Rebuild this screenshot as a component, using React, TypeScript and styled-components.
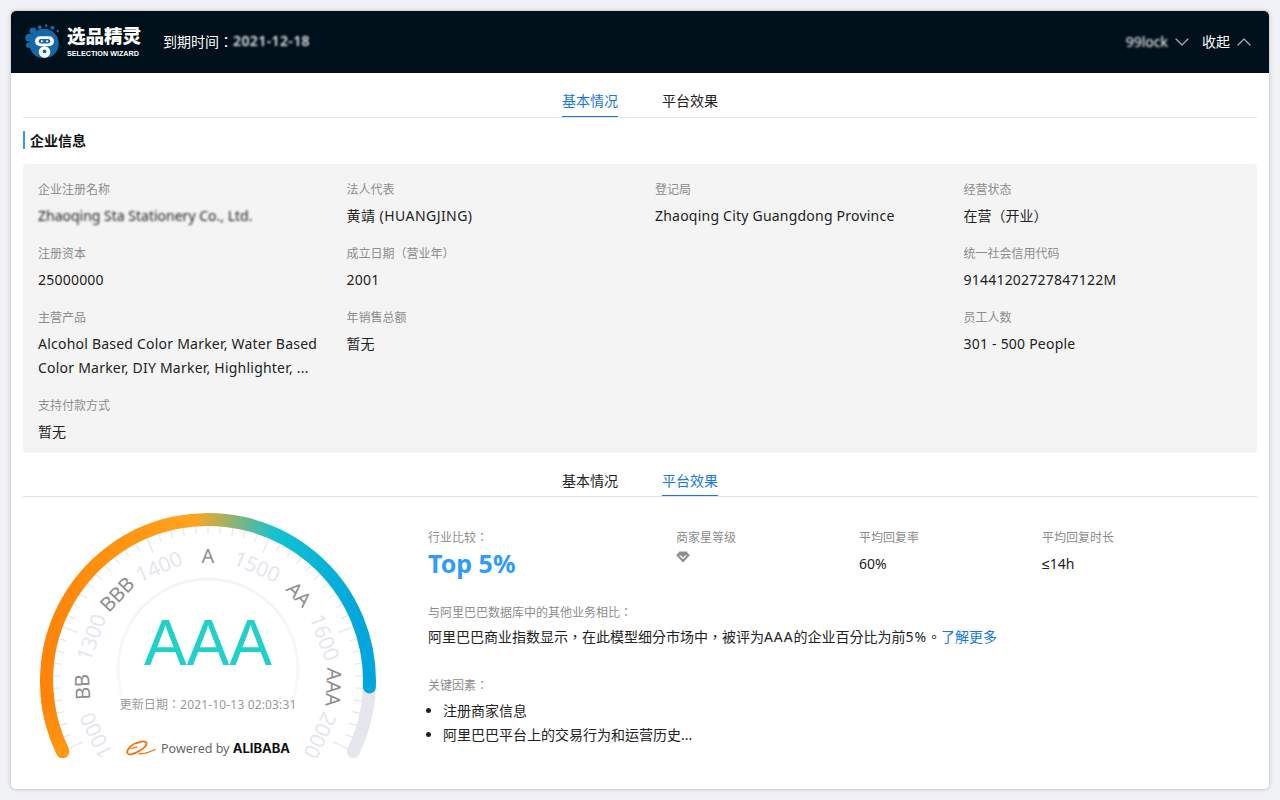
import React from 'react';
import styled, { createGlobalStyle } from 'styled-components';
import { ChevronDown, ChevronUp } from 'lucide-react';

const GlobalStyle = createGlobalStyle`
  html, body {
    margin: 0;
    background: #f0f2f5;
    font-family: "Noto Sans", "Noto Sans CJK TC", sans-serif;
    color: #222;
  }
  * { box-sizing: border-box; }
`;

const Page = styled.div`
  padding: 11px;
  height: 800px;
  overflow: hidden;
`;

const Card = styled.div`
  height: 778px;
  background: #fff;
  border-radius: 5px;
  box-shadow: 0 0 4px rgba(0, 0, 0, 0.25);
  overflow: hidden;
`;

const Header = styled.header`
  height: 62px;
  background: #00101a;
  display: flex;
  align-items: center;
  padding: 0 13px;
  color: #fff;
`;

const Brand = styled.div`
  display: flex;
  align-items: center;
  gap: 3px;
`;

const BrandText = styled.div`
  display: flex;
  flex-direction: column;
  width: 75px;
`;

const BrandName = styled.span`
  font-size: 18.5px;
  line-height: 22px;
  font-weight: 900;
  white-space: nowrap;
`;

const BrandSub = styled.span`
  margin-top: 2px;
  font-family: "Liberation Sans", sans-serif;
  font-size: 7.2px;
  line-height: 10px;
  font-weight: 700;
  white-space: nowrap;
`;

const Expire = styled.div`
  margin-left: 21px;
  padding-bottom: 3px;
  font-size: 14px;
  display: flex;
  align-items: center;
`;

const Blurred = styled.span`
  filter: blur(1.2px);
`;

const ExpireDate = styled(Blurred)`
  opacity: 0.9;
  font-weight: 600;
  letter-spacing: 0.4px;
`;

const HeaderRight = styled.div`
  margin-left: auto;
  display: flex;
  align-items: center;
  font-size: 14px;
`;

const HeaderAction = styled.div`
  display: flex;
  align-items: center;
  gap: 2px;
  & + & {
    margin-left: 8px;
  }
  svg {
    color: #a9aeb2;
  }
`;

const ActionLabel = styled.span`
  padding-bottom: 2px;
`;

const Tabs = styled.nav<{ $height: number }>`
  margin: 0 12px;
  height: ${p => p.$height}px;
  display: flex;
  justify-content: center;
  gap: 44px;
  border-bottom: 1px solid #e4e4e4;
`;

const Tab = styled.div<{ $active?: boolean }>`
  height: 100%;
  font-size: 14px;
  line-height: 24px;
  padding-top: 16px;
  color: ${p => (p.$active ? '#1677e8' : '#222')};
  border-bottom: 1px solid ${p => (p.$active ? '#1677e8' : 'transparent')};
`;

const Section = styled.section`
  padding: 0 12px;
`;

const SectionTitle = styled.h3`
  margin: 13px 0 15px;
  height: 18px;
  padding-left: 5px;
  border-left: 2px solid #2e9bff;
  font-size: 14px;
  line-height: 20px;
  font-weight: 700;
  color: #111;
`;

const InfoPanel = styled.div`
  display: grid;
  grid-template-columns: repeat(4, 1fr);
  row-gap: 18px;
  padding: 18px 0 9px;
  background: #f4f4f4;
  border-radius: 4px;
`;

const Field = styled.div`
  padding: 0 4px 0 15px;
`;

const FieldLabel = styled.div`
  font-size: 12px;
  line-height: 16px;
  color: #8c8c8c;
`;

const FieldValue = styled.div<{ $spacing?: number }>`
  margin-top: 6px;
  font-size: 14px;
  line-height: 24px;
  letter-spacing: ${p => p.$spacing ?? 0.22}px;
  color: #222;
`;

const Performance = styled.div`
  display: flex;
  padding: 0 12px;
`;

const Gauge = styled.svg`
  flex: none;
  width: 370px;
  height: 275px;
  margin-top: 8px;
`;

const RatingLabel = styled.text`
  font-size: 20px;
  fill: #8e8e8e;
  text-anchor: middle;
  dominant-baseline: central;
`;

const ScaleLabel = styled(RatingLabel)`
  font-size: 21px;
  fill: #e5e6ef;
`;

const GradeText = styled.text`
  font-family: "Liberation Sans", sans-serif;
  font-size: 64px;
  fill: #1fd1c8;
  text-anchor: middle;
`;

const UpdatedText = styled.text`
  font-size: 12px;
  letter-spacing: 0.15px;
  fill: #999;
  text-anchor: middle;
`;

const PoweredText = styled.text`
  font-size: 12.5px;
  fill: #666;
`;

const PoweredBrand = styled.tspan`
  font-family: "Inter", sans-serif;
  font-size: 13px;
  font-weight: 700;
  fill: #111;
`;

const Details = styled.div`
  margin-left: 35px;
  flex: 1;
  padding-top: 33px;
`;

const Stats = styled.div`
  display: grid;
  grid-template-columns: 248px 183px 183px 183px;
`;

const SmallLabel = styled.div`
  font-size: 12px;
  line-height: 16px;
  color: #8c8c8c;
`;

const TopValue = styled.div`
  margin-top: 1px;
  font-size: 25px;
  line-height: 32px;
  font-weight: 700;
  color: #2e9bff;
`;

const StatValue = styled.div`
  margin-top: 2px;
  font-size: 14px;
  line-height: 32px;
  color: #222;
`;

const MathSign = styled.span`
  font-family: "Liberation Sans", sans-serif;
`;

const Diamond = styled.svg`
  display: block;
  margin-top: 5px;
  width: 14px;
  height: 12px;
`;

const Block = styled.div<{ $top: number }>`
  margin-top: ${p => p.$top}px;
`;

const Paragraph = styled.p`
  margin: 4px 0 0;
  font-size: 14px;
  line-height: 24px;
  color: #222;
`;

const Latin = styled.span`
  letter-spacing: 0.9px;
`;

const More = styled.a`
  color: #1677e8;
`;

const Factors = styled.ul`
  margin: 5px 0 0;
  padding-left: 15px;
  font-size: 14px;
  line-height: 24px;
  color: #222;
`;

// gauge geometry, angles are clockwise from 12 o'clock
const CX = 185;
const CY = 176;
const SWEEP = 115.9;

const polar = (r: number, deg: number) => {
  const a = (deg * Math.PI) / 180;
  return { x: CX + r * Math.sin(a), y: CY - r * Math.cos(a) };
};

const arc = (r: number, from: number, to: number) => {
  const a = polar(r, from);
  const b = polar(r, to);
  return `M${a.x} ${a.y} A${r} ${r} 0 ${to - from > 180 ? 1 : 0} 1 ${b.x} ${b.y}`;
};

const SEGMENT = (SWEEP * 2) / 5;
const ticks = Array.from({ length: 51 }, (_, i) => i);
const scale = ['1000', '1300', '1400', '1500', '1600', '2000'];
const ratings = ['BB', 'BBB', 'A', 'AA', 'AAA'];

const RatingGauge = () => (
  <Gauge viewBox="0 0 370 275">
    <defs>
      <linearGradient id="arcFill" gradientUnits="userSpaceOnUse" x1="17" y1="0" x2="353" y2="0">
        <stop offset="0" stopColor="#ff8208" />
        <stop offset="0.46" stopColor="#ffa51c" />
        <stop offset="0.7" stopColor="#14c3d0" />
        <stop offset="0.95" stopColor="#02a6dd" />
      </linearGradient>
      <linearGradient id="arcStart" gradientUnits="userSpaceOnUse" x1="0" y1="190" x2="0" y2="255">
        <stop offset="0" stopColor="#ff8208" />
        <stop offset="1" stopColor="#ff9a12" />
      </linearGradient>
      <linearGradient id="ringFill" gradientUnits="userSpaceOnUse" x1="0" y1="74" x2="0" y2="215">
        <stop offset="0" stopColor="#f4f4f8" />
        <stop offset="0.75" stopColor="#f8f8fa" />
        <stop offset="1" stopColor="#ffffff" />
      </linearGradient>
    </defs>

    {ticks.map(i => {
      const deg = -SWEEP + (i * SEGMENT) / 10;
      const major = i % 10 === 0;
      const a = polar(156, deg);
      const b = polar(major ? 139 : 147, deg);
      return <line key={i} x1={a.x} y1={a.y} x2={b.x} y2={b.y} stroke="#e6e7ef" strokeWidth="1.2" />;
    })}

    <path d={arc(161.5, 90, SWEEP)} fill="none" stroke="#e6e7ed" strokeWidth="13" strokeLinecap="round" />
    <path d={arc(161.5, -SWEEP, 92.1)} fill="none" stroke="url(#arcFill)" strokeWidth="13" strokeLinecap="round" />
    <path d={arc(161.5, -SWEEP, -95)} fill="none" stroke="url(#arcStart)" strokeWidth="13" strokeLinecap="round" />

    <circle cx={CX} cy="164" r="90" fill="none" stroke="url(#ringFill)" strokeWidth="3" />

    {scale.map((label, i) => {
      const deg = -SWEEP + i * SEGMENT;
      const p = polar(125, deg);
      return (
        <ScaleLabel key={label} x={p.x} y={p.y} transform={`rotate(${deg} ${p.x} ${p.y})`}>
          {label}
        </ScaleLabel>
      );
    })}
    {ratings.map((label, i) => {
      const deg = -SWEEP + (i + 0.5) * SEGMENT;
      const p = polar(126, deg);
      return (
        <RatingLabel key={label} x={p.x} y={p.y} transform={`rotate(${deg} ${p.x} ${p.y})`}>
          {label}
        </RatingLabel>
      );
    })}

    <GradeText x={CX} y="160">AAA</GradeText>
    <UpdatedText x={CX} y="204">更新日期：2021-10-13 02:03:31</UpdatedText>

    <g transform="translate(103 235)" fill="none" stroke="#ff6a00" strokeLinecap="round">
      <path d="M12 2.5 C6 3.5 1 9 1.2 12.5 C1.5 15.5 7 15 14 10.5 C19 7.5 22 4 20 2.2 C18 1 14 1.5 11 3" strokeWidth="1.7" />
      <path d="M5 8.5 L11 7.2" strokeWidth="1.2" />
      <path d="M13 13.5 C18 14.5 24 12 29 9.5" strokeWidth="1.3" />
    </g>
    <PoweredText x="138" y="248">
      Powered by <PoweredBrand>ALIBABA</PoweredBrand>
    </PoweredText>
  </Gauge>
);

const Logo = () => (
  <svg width="40" height="40" viewBox="0 0 38 38">
    <circle cx="19" cy="20.5" r="14" fill="#1668a8" />
    <circle cx="5" cy="15" r="3.8" fill="#1668a8" />
    <circle cx="8.5" cy="8.5" r="3.2" fill="#1668a8" />
    <circle cx="4.5" cy="22" r="2.6" fill="#1668a8" />
    <circle cx="15" cy="5" r="1.9" fill="#1668a8" />
    <circle cx="21" cy="3.5" r="1.3" fill="#1668a8" />
    <circle cx="27" cy="5.5" r="1.9" fill="#1668a8" />
    <circle cx="32" cy="8.5" r="1.2" fill="#1668a8" />
    <rect x="10.5" y="13.5" width="18" height="9.5" rx="4.7" fill="#fff" />
    <rect x="14" y="16.2" width="11" height="4.2" rx="2.1" fill="#1668a8" />
    <circle cx="17" cy="18.3" r="1" fill="#fff" />
    <circle cx="22" cy="18.3" r="1" fill="#fff" />
    <circle cx="19.5" cy="28.5" r="5.5" fill="#fff" />
    <circle cx="19.5" cy="28" r="1.8" fill="#1668a8" />
  </svg>
);

const App = () => (
  <Page>
    <GlobalStyle />
    <Card>
      <Header>
        <Brand>
          <Logo />
          <BrandText>
            <BrandName>选品精灵</BrandName>
            <BrandSub>SELECTION WIZARD</BrandSub>
          </BrandText>
        </Brand>
        <Expire>
          到期时间：<ExpireDate>2021-12-18</ExpireDate>
        </Expire>
        <HeaderRight>
          <HeaderAction>
            <ActionLabel><Blurred>99lock</Blurred></ActionLabel>
            <ChevronDown size={24} strokeWidth={1.2} />
          </HeaderAction>
          <HeaderAction>
            <ActionLabel>收起</ActionLabel>
            <ChevronUp size={24} strokeWidth={1.2} />
          </HeaderAction>
        </HeaderRight>
      </Header>

      <Tabs $height={45}>
        <Tab $active>基本情况</Tab>
        <Tab>平台效果</Tab>
      </Tabs>

      <Section>
        <SectionTitle>企业信息</SectionTitle>
        <InfoPanel>
          <Field>
            <FieldLabel>企业注册名称</FieldLabel>
            <FieldValue $spacing={0}><Blurred>Zhaoqing Sta Stationery Co., Ltd.</Blurred></FieldValue>
          </Field>
          <Field>
            <FieldLabel>法人代表</FieldLabel>
            <FieldValue $spacing={0.45}>黄靖 (HUANGJING)</FieldValue>
          </Field>
          <Field>
            <FieldLabel>登记局</FieldLabel>
            <FieldValue>Zhaoqing City Guangdong Province</FieldValue>
          </Field>
          <Field>
            <FieldLabel>经营状态</FieldLabel>
            <FieldValue $spacing={0}>在营（开业）</FieldValue>
          </Field>

          <Field>
            <FieldLabel>注册资本</FieldLabel>
            <FieldValue>25000000</FieldValue>
          </Field>
          <Field>
            <FieldLabel>成立日期（营业年）</FieldLabel>
            <FieldValue>2001</FieldValue>
          </Field>
          <Field />
          <Field>
            <FieldLabel>统一社会信用代码</FieldLabel>
            <FieldValue>91441202727847122M</FieldValue>
          </Field>

          <Field>
            <FieldLabel>主营产品</FieldLabel>
            <FieldValue>Alcohol Based Color Marker, Water Based Color Marker, DIY Marker, Highlighter, ...</FieldValue>
          </Field>
          <Field>
            <FieldLabel>年销售总额</FieldLabel>
            <FieldValue $spacing={0}>暂无</FieldValue>
          </Field>
          <Field />
          <Field>
            <FieldLabel>员工人数</FieldLabel>
            <FieldValue>301 - 500 People</FieldValue>
          </Field>

          <Field>
            <FieldLabel>支持付款方式</FieldLabel>
            <FieldValue $spacing={0}>暂无</FieldValue>
          </Field>
        </InfoPanel>
      </Section>

      <Tabs $height={44}>
        <Tab>基本情况</Tab>
        <Tab $active>平台效果</Tab>
      </Tabs>

      <Performance>
        <RatingGauge />
        <Details>
          <Stats>
            <div>
              <SmallLabel>行业比较：</SmallLabel>
              <TopValue>Top 5%</TopValue>
            </div>
            <div>
              <SmallLabel>商家星等级</SmallLabel>
              <Diamond viewBox="0 0 14 12">
                <path d="M3.5 0.5 H10.5 L13.8 4.2 L7 11.5 L0.2 4.2 Z" fill="#8f8f8f" />
                <path d="M3.8 4.4 L7 7.4 L10.2 4.4" fill="none" stroke="#fff" strokeWidth="1.2" />
              </Diamond>
            </div>
            <div>
              <SmallLabel>平均回复率</SmallLabel>
              <StatValue>60%</StatValue>
            </div>
            <div>
              <SmallLabel>平均回复时长</SmallLabel>
              <StatValue><MathSign>≤</MathSign>14h</StatValue>
            </div>
          </Stats>

          <Block $top={25}>
            <SmallLabel>与阿里巴巴数据库中的其他业务相比：</SmallLabel>
            <Paragraph>
              阿里巴巴商业指数显示，在此模型细分市场中，被评为<Latin>AAA</Latin>的企业百分比为前<Latin>5%</Latin>。<More>了解更多</More>
            </Paragraph>
          </Block>

          <Block $top={29}>
            <SmallLabel>关键因素：</SmallLabel>
            <Factors>
              <li>注册商家信息</li>
              <li>阿里巴巴平台上的交易行为和运营历史...</li>
            </Factors>
          </Block>
        </Details>
      </Performance>
    </Card>
  </Page>
);

export default App;
